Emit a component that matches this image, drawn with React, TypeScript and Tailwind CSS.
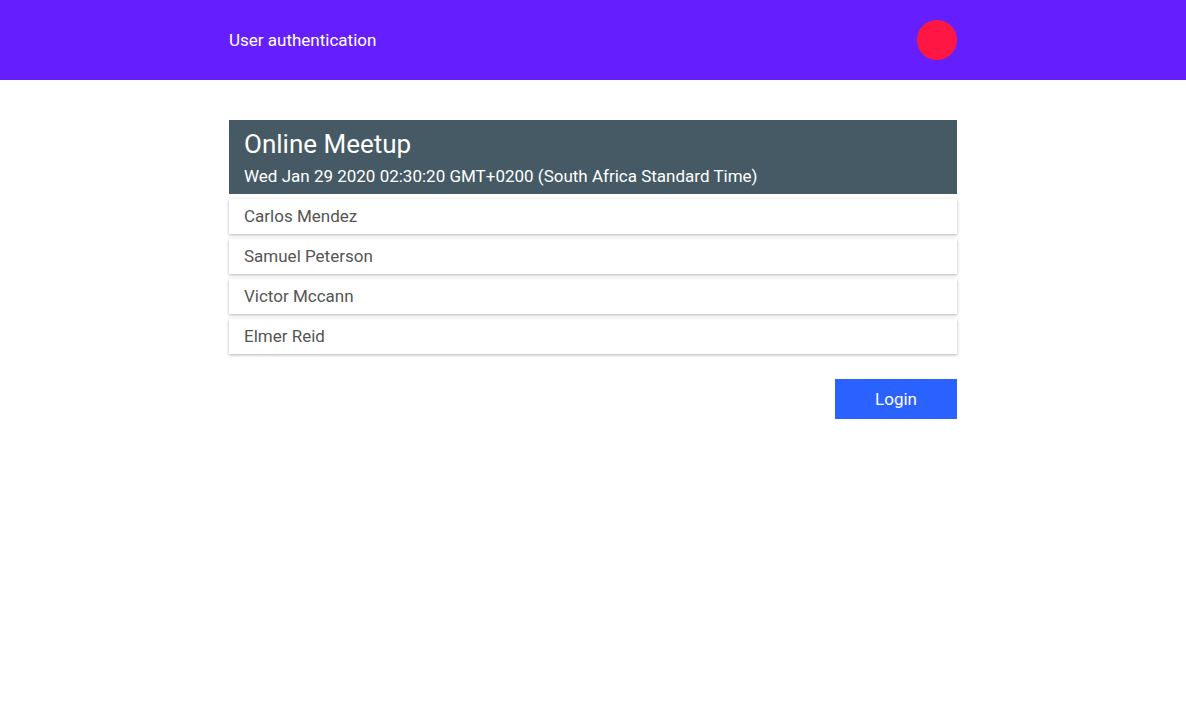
export default function App() {
  const people = ['Carlos Mendez', 'Samuel Peterson', 'Victor Mccann', 'Elmer Reid'];

  return (
    <div className="min-h-screen bg-white font-['Roboto',sans-serif]">
      {/* Top bar */}
      <div className="h-20 bg-[#651fff]">
        <div className="mx-auto flex h-full w-[728px] items-center justify-between">
          <span className="pt-[2px] text-[17px] text-white">User authentication</span>
          <div className="h-10 w-10 rounded-full bg-[#ff1744]" />
        </div>
      </div>

      <div className="mx-auto mt-10 w-[728px]">
        {/* Meetup card header */}
        <div className="h-[74px] bg-[#455a64] px-[15px] pt-[7px] text-white">
          <h1 className="text-[26px] leading-[34px]">Online Meetup</h1>
          <p className="mt-[4px] text-[17px] leading-[22px]">
            Wed Jan 29 2020 02:30:20 GMT+0200 (South Africa Standard Time)
          </p>
        </div>

        {/* Attendees */}
        <div className="mt-[5px] flex flex-col gap-[5px]">
          {people.map((name) => (
            <div
              key={name}
              className="flex h-[35px] items-center bg-white px-[15px] text-[17px] text-[#555] shadow-[0_1px_3px_rgba(0,0,0,0.3)]"
            >
              {name}
            </div>
          ))}
        </div>

        <div className="mt-[25px] flex justify-end">
          <button className="h-10 w-[122px] pt-[2px] bg-[#2962ff] text-[17px] text-white">Login</button>
        </div>
      </div>
    </div>
  );
}
